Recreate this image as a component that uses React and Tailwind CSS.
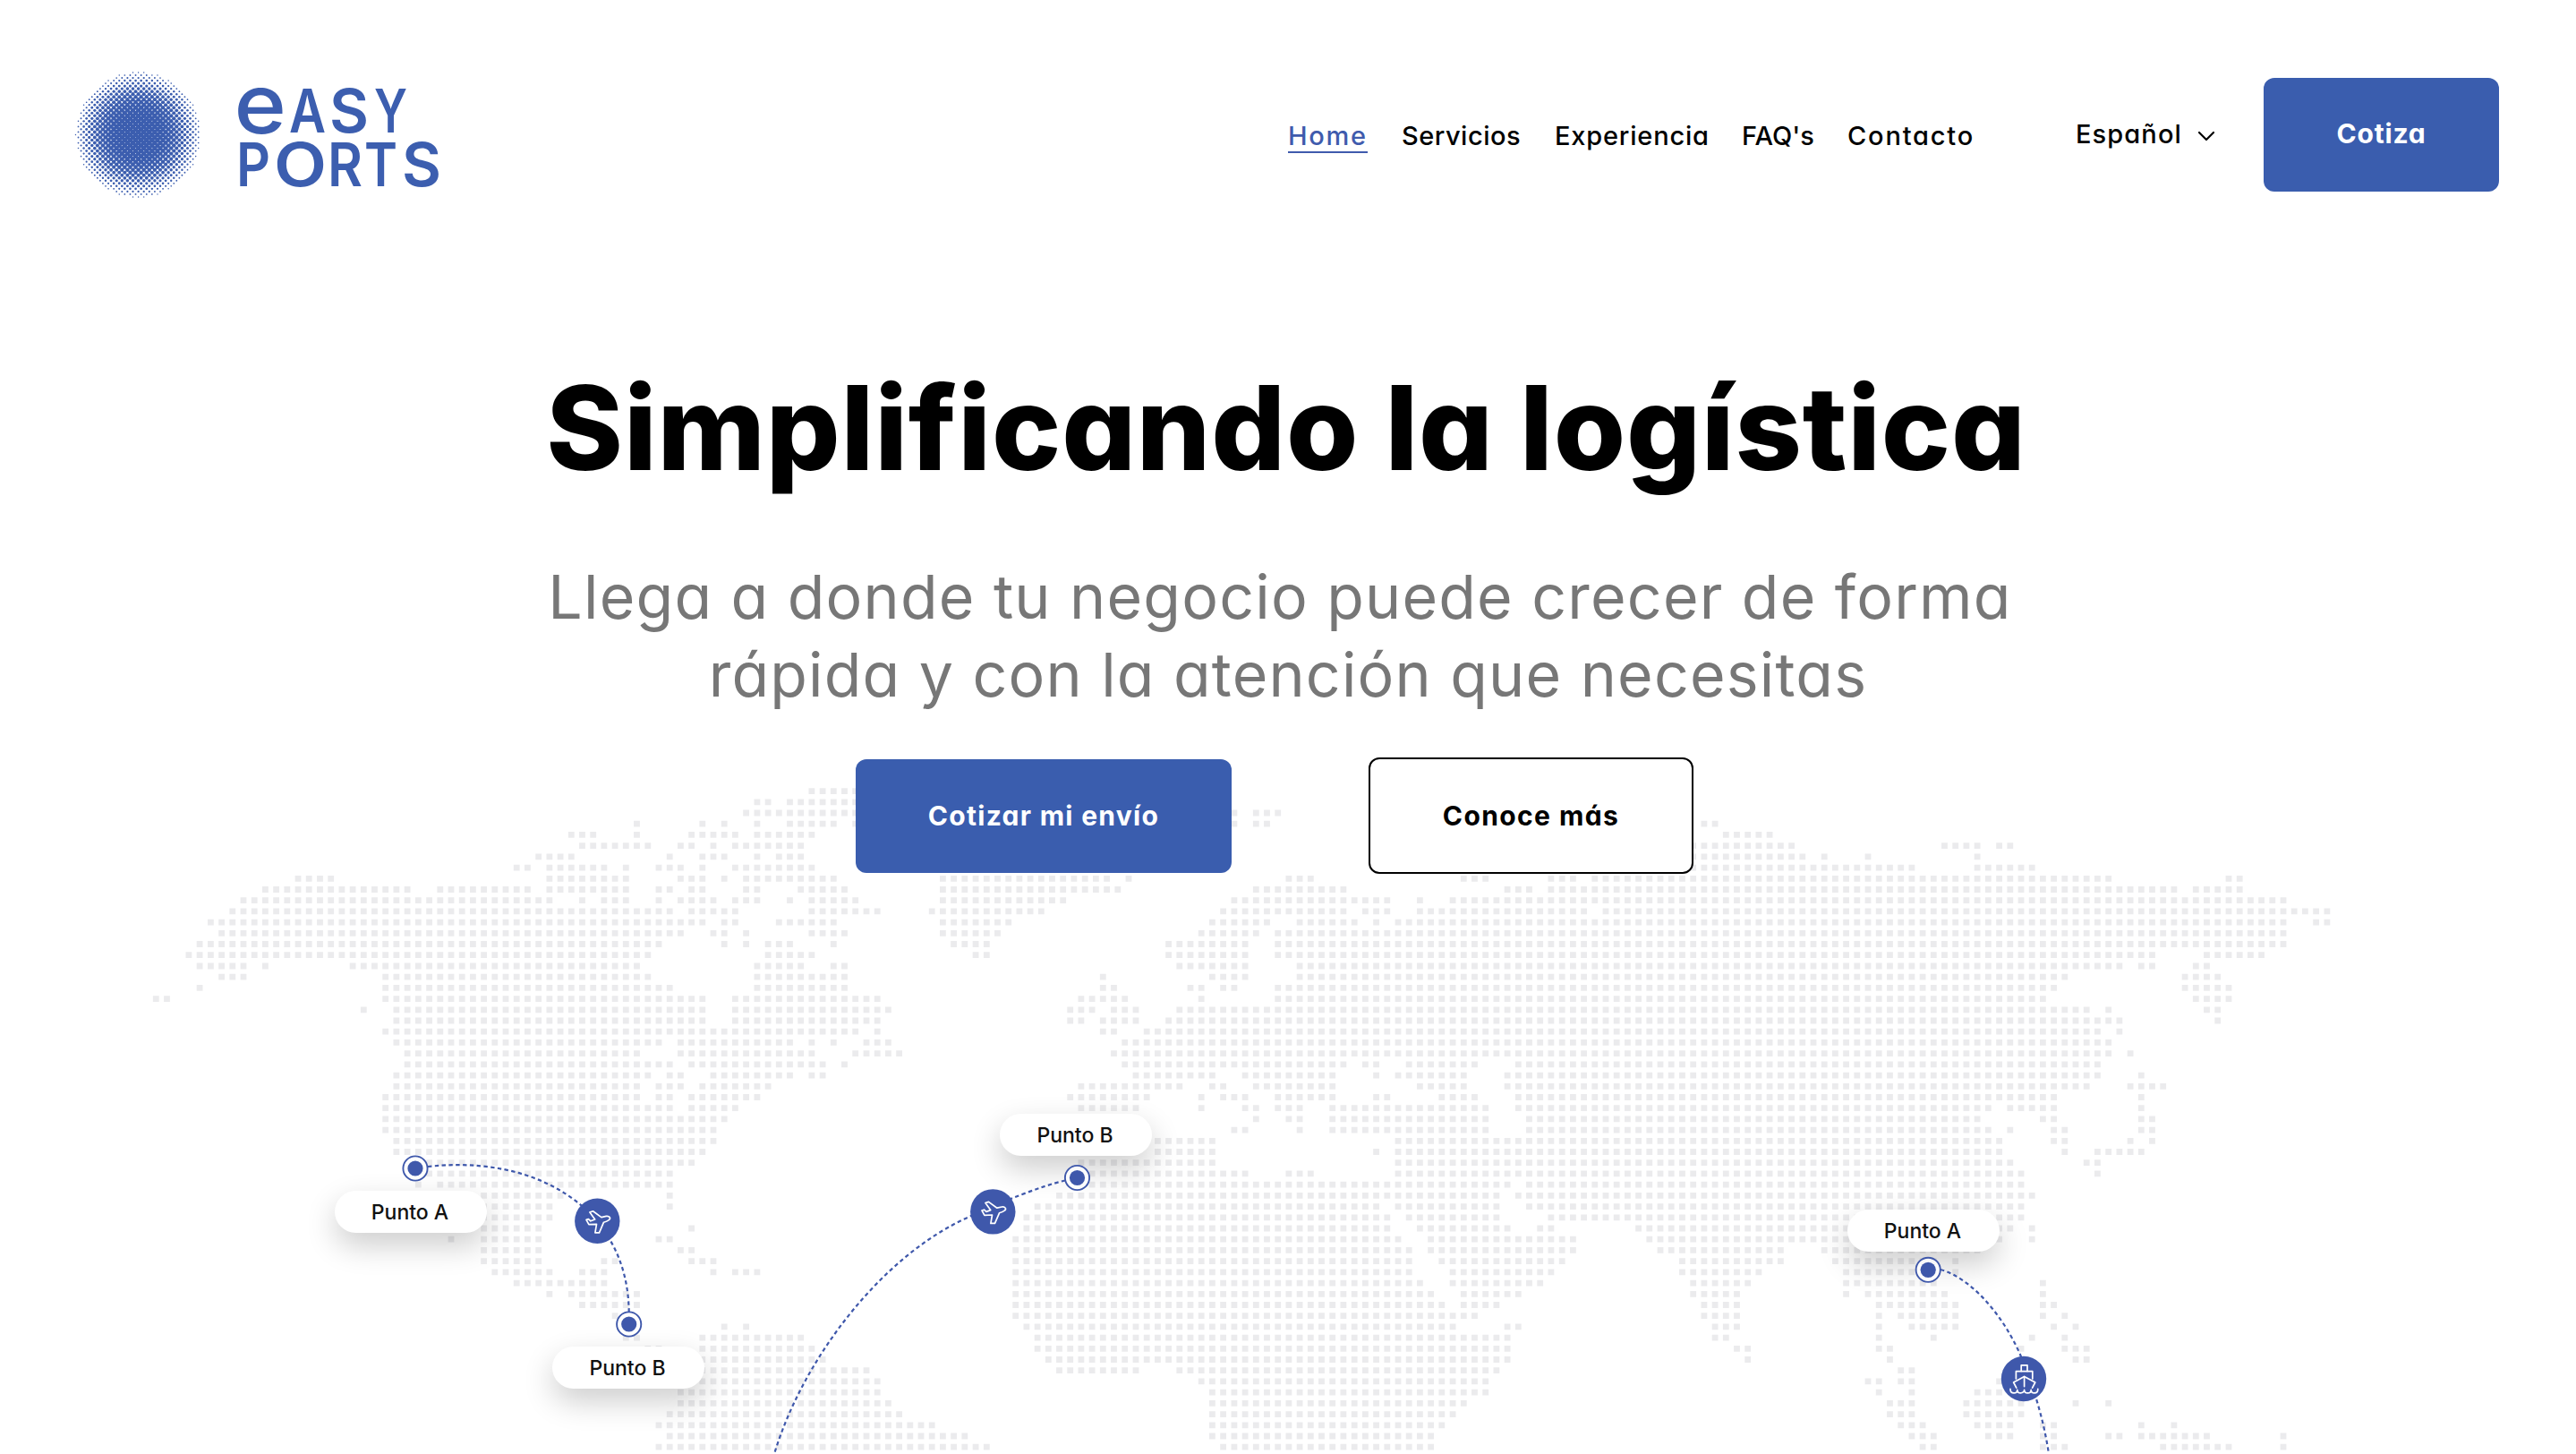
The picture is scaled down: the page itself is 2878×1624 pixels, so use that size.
import React from "react";
import { ChevronDown } from "lucide-react";

// Filled column spans of every dot row, top to bottom.
const PITCH = 12.21;
const TOP = 883.6;

const AMERICAS = [
  "60-64",
  "55-56,58-64",
  "54-64",
  "44,50,52,55,58-62,64",
  "38-40,44,49-53,55-60",
  "39-45,48-49,51,53-59",
  "35-38,47,50-52,55,57-59",
  "33-34,36-41,43,46-48,50,53-60",
  "13-16,36-43,48-50,52,54-62,72-87,89",
  "10-23,26-34,36-43,46-47,49-50,54-55,59-63,72-88",
  "8-36,39,41-43,46,48-51,53-55,58,60-64,72-83",
  "7-47,49-53,60-66,71-81",
  "5-50,52-53,57-62,72-78",
  "6-48,51-52,54,60-63,72-77",
  "4-46,52,54,56-58,62,73-76",
  "3-45,56-60,75-76",
  "4-8,10,18-44,55-59,62-63",
  "6-8,21-45,55-63",
  "4,21-47,55-63",
  "0-1,21-50,53-66",
  "19,22-50,53-67",
  "22-50,53-66",
  "21-64,66",
  "22-46,48-58,60,62,65-67",
  "23-44,48-60,64-68",
  "23-47,49-61,63",
  "22-45,47-48,51-58,60-61",
  "22-44,46-48,50-56",
  "21-44,46-47,49-55",
  "21-47,49-53",
  "21-52",
  "21-51",
  "22-51",
  "22-50",
  "25-49",
  "25-47",
  "24,26-47",
  "30-37,47",
  "30-36,47",
  "30-36",
  "30-35,49",
  "27,30-35,46-47",
  "30-35,48-49",
  "30-35,41-42,49-51",
  "31-36,39-41,51,53-55",
  "33-41",
  "36,38-44",
  "39-44",
  "42",
  "52,54",
  "43-44,50-59",
  "45-46,50-60",
  "50-61",
  "50-65",
  "50-66",
  "48-66",
  "48-67",
  "47-68",
  "46-71",
  "47-74",
  "46-76",
];

const OLD_WORLD = [
  "",
  "",
  "15,17-19",
  "15,17-18,58-59",
  "60-64",
  "57-66,80-83,85-86",
  "57-67,69,73,83",
  "57-77,83-88",
  "20-22,36-38,44-46,48-95,106-107",
  "17-25,40-42,44-101,103-107",
  "15-29,32,35-111",
  "14-25,27-29,32-47,49-115",
  "13-18,21-26,28,30-111,114-115",
  "12-17,19-111",
  "9-16,19-111",
  "9-16,19-99,104-109",
  "10-16,21-96,98-99,103-104",
  "3,13-16,21-91,102-105",
  "3-4,11-12,14-15,19-90,102-106",
  "1-5,12,19-89,103-106",
  "0-2,4-6,10-93,95,104-105",
  "0-1,3-6,9-96,105",
  "3-4,7-94,96",
  "5-95",
  "4-95,97",
  "5-25,27-28,31-37,41-94",
  "6-13,16-24,28,30-36,40-94,98",
  "1-10,13-14,17-24,32-36,40-93,97-100",
  "0-7,12,14-16,19-24,28-29,34-37,41-90,98",
  "1-6,12,16-17,19-21,24-38,41-84,86-90,98",
  "17,20-21,24-38,42-83,89-90,98-99",
  "15-16,21,24-38,42-84,86,90-91,98-99",
  "8-13,30-85,90-91,97,99",
  "8-13,28,30-85,91,94-98",
  "1-13,30-86,93-94",
  "2-16,20-22,30-87,94",
  "1-40,42-87",
  "-1-39,41-88",
  "-3-28,30-39,42-87",
  "-4-29,31-39,44-87",
  "-4-29,32-40,43-44,52-86,88",
  "-5-30,33-46,53-85,88",
  "-5-31,33-46,54-65,69-83",
  "-5-31,34-45,56-65,70-79,81",
  "-5-31,35-44,56-63,71-79,81",
  "-5-32,35-43,57-62,71-79,89",
  "-5-33,36-41,57-61,71,73-80,89",
  "-5-34,36-39,58-61,74-81,89-90",
  "-5-35,36-37,58-61,74,76-81,89,91",
  "-4-35,40-41,59-61,74,77-81,90,92",
  "-3-40,59-60,74,79,88,91",
  "-3-40,61-62,74-75,87,91-93",
  "-2-40,62,75,92-93",
  "-1-6,10-39,76-77",
  "12-38,73-74,76-77,85",
  "13-38,74,77,83-85",
  "13-36,75-77,82-87,92,95",
  "13-35,75-77,82-87",
  "13-34,76-78,83-86,89-90,98,101",
  "13-33,77-79,84-86,89-90,95-96,98-104,111",
  "14-33,78-79,89-91,100-106,111",
];

function dotPath(rows, originX) {
  let d = "";
  rows.forEach((row, r) => {
    if (!row) return;
    row.split(",").forEach((span) => {
      const [, a, b] = span.match(/^(-?\d+)(?:-(\d+))?$/);
      const last = b === undefined ? Number(a) : Number(b);
      for (let c = Number(a); c <= last; c++) {
        const x = (originX + c * PITCH - 3.4).toFixed(1);
        const y = (TOP + r * PITCH - 3.4).toFixed(1);
        d += `M${x} ${y}h6.8v6.8h-6.8z`;
      }
    });
  });
  return d;
}

const AMERICAS_PATH = dotPath(AMERICAS, 174.3);
const OLD_WORLD_PATH = dotPath(OLD_WORLD, 1195.7);

function Marker({ x, y }) {
  return (
    <g>
      <circle cx={x} cy={y} r="13.6" fill="#fff" fillOpacity="0.85" stroke="#3f58ab" strokeWidth="1.9" />
      <circle cx={x} cy={y} r="8.6" fill="#3f58ab" />
    </g>
  );
}

function PlaneStop({ x, y }) {
  return (
    <g transform={`translate(${x} ${y})`}>
      <circle r="25.2" fill="#3f58ab" />
      <path
        d="M-12.3 -1.4L-9.8 -2.2L-7.4 0L-2.6 -1.8L-8.4 -9.8L-4.8 -11L4.6 -4.2L10 -5.4C13.6 -6 15.6 -3.2 13 -1.2C11.2 0.2 8.8 1 7.2 1.4L2.2 13L-2.4 13L-0.8 3.6L-9.4 3.9Z"
        fill="none"
        stroke="#fff"
        strokeWidth="1.7"
        strokeLinejoin="round"
      />
    </g>
  );
}

function ShipStop({ x, y }) {
  return (
    <g transform={`translate(${x} ${y})`}>
      <circle r="25.2" fill="#3f58ab" />
      <g fill="none" stroke="#fff" strokeWidth="1.7" strokeLinejoin="round" strokeLinecap="round">
        <path d="M-2.8 -8.5V-15.2H4V-8.5" />
        <path d="M-8.6 0V-8.3H9.8V0" />
        <path d="M-8.2 10.2L-11.4 4L0.6 -2.6L12.8 4L9.6 10.2" />
        <path d="M0.6 -2.4V8.6" />
        <path d="M-15 11.4C-15 14.6 -13 15.8 -11 15.8C-8.6 15.8 -7.2 14.4 -7.2 12.4C-7.2 14.4 -5.6 15.8 -3.4 15.8C-1.2 15.8 0.6 14.4 0.6 12.4C0.6 14.4 2.2 15.8 4.4 15.8C6.8 15.8 8.2 14.4 8.2 12.4C8.2 14.4 9.8 15.8 12 15.8C14.2 15.8 15.8 14.6 15.8 11.4" />
      </g>
    </g>
  );
}

function Pill({ className, children }) {
  return (
    <div
      className={`absolute flex h-[47px] w-[170px] items-center justify-center rounded-full bg-white pt-px pr-[2px] text-[23px] font-medium text-[#111] shadow-[0_14px_34px_rgba(0,0,0,0.2)] ${className}`}
    >
      {children}
    </div>
  );
}

function WorldMap() {
  return (
    <div className="absolute inset-0 overflow-hidden">
      <svg className="absolute inset-0" width="2878" height="1624" viewBox="0 0 2878 1624">
        <path d={AMERICAS_PATH} fill="#ebebed" />
        <path d={OLD_WORLD_PATH} fill="#ebebed" />
      </svg>
      <Pill className="left-[374px] top-[1330px]">Punto A</Pill>
      <Pill className="left-[617px] top-[1504px]">Punto B</Pill>
      <Pill className="left-[1117px] top-[1244px]">Punto B</Pill>
      <Pill className="left-[2064px] top-[1351px]">Punto A</Pill>
      <svg className="absolute inset-0" width="2878" height="1624" viewBox="0 0 2878 1624">
        <g fill="none" stroke="#3f58ab" strokeWidth="2.2" strokeDasharray="4.4 3.4">
          <path d="M478 1303C560 1294 628 1318 667 1364C690 1392 702 1425 702.7 1465" />
          <path d="M1190 1318.5C1162 1325 1120 1342 1083 1359C985 1402 897 1518 865 1624" />
          <path d="M2168 1418C2210 1430 2247 1484 2261 1523C2274 1555 2284 1590 2289 1624" />
        </g>
        <Marker x={464} y={1305} />
        <Marker x={702.7} y={1479} />
        <Marker x={1203.5} y={1315.5} />
        <Marker x={2154.2} y={1418.3} />
        <PlaneStop x={667.3} y={1363.8} />
        <PlaneStop x={1109.3} y={1353.4} />
        <ShipStop x={2261} y={1540} />
      </svg>
    </div>
  );
}

function halftoneDots() {
  const dots = [];
  for (let j = 0; j <= 46; j++) {
    const y = 2 + j * 3.02;
    for (let i = -1; i < 25; i++) {
      const x = -1.6 + i * 6.1 + (j % 2 ? 3.05 : 0);
      const dist = Math.hypot(x - 71.3, y - 71.5) / 70;
      if (dist <= 1) dots.push([x, y, 2.75 - 2.05 * dist ** 2.6]);
    }
  }
  return dots;
}

const DOTS = halftoneDots();

// Each letter: character, left edge, advance width, baseline, font size, weight.
const LETTERS = [
  ["e", 261.5, 58.5, 148.6, 92, 500],
  ["A", 323, 41, 148.3, 66.8, 600],
  ["S", 368, 44, 148.3, 66.8, 600],
  ["Y", 418, 37, 148.3, 66.8, 600],
  ["P", 264, 38, 208, 66.8, 600],
  ["O", 306, 59, 208, 66.8, 600],
  ["R", 366, 39, 208, 66.8, 600],
  ["T", 407, 37, 208, 66.8, 600],
  ["S", 449, 44, 208, 66.8, 600],
];

function Logo() {
  return (
    <div className="flex">
      <svg width="143" height="143" viewBox="0 0 143 143" fill="#3c5eaf">
        {DOTS.map(([x, y, r], i) => (
          <circle key={i} cx={x} cy={y} r={r} />
        ))}
      </svg>
      <svg width="270" height="143" viewBox="226 79 270 143" fill="#3c5eaf" overflow="visible">
        {LETTERS.map(([ch, x, w, y, size, weight], i) => (
          <text key={i} x={x} y={y} fontSize={size} fontWeight={weight} textLength={w} lengthAdjust="spacingAndGlyphs">
            {ch}
          </text>
        ))}
      </svg>
    </div>
  );
}

export default function App() {
  return (
    <div className="relative h-[1624px] w-[2878px] overflow-hidden bg-white font-['Inter',sans-serif] text-black [font-feature-settings:'cv11']">
      <WorldMap />
      <div className="relative">
        <header className="flex h-[301px] items-center pl-[83px] pr-[86px]">
          <Logo />
          <nav className="ml-auto flex gap-[38px] whitespace-nowrap pt-[3px] text-[29px] leading-[35px] font-medium">
            <a className="w-[89px] border-b-2 border-[#3f5bad] text-[#3f5bad] tracking-[1.7px]">Home</a>
            <a className="w-[133px] tracking-[0.5px]">Servicios</a>
            <a className="w-[171px] tracking-[0.8px]">Experiencia</a>
            <a className="w-[80px]">FAQ's</a>
            <a className="w-[142px] tracking-[1.8px]">Contacto</a>
          </nav>
          <div className="ml-[113px] flex w-[158px] items-center justify-between whitespace-nowrap pb-[2px] text-[29px] font-medium tracking-[1.1px]">
            Español
            <ChevronDown className="relative top-[2px] -mr-[4px] size-8" strokeWidth={1.6} />
          </div>
          <a className="ml-[52px] flex h-[127px] w-[263px] items-center justify-center rounded-xl bg-[#3a5dae] pb-[2px] text-[30px] font-bold tracking-[0.8px] text-white">
            Cotiza
          </a>
        </header>
        <main className="flex flex-col items-center">
          <h1 className="mt-[97px] whitespace-nowrap pr-1 text-[130px] leading-[160px] font-extrabold tracking-[0.8px]">
            Simplificando la logística
          </h1>
          <p className="mt-[65px] whitespace-nowrap text-center text-[68px] leading-[86.5px] tracking-[1.2px] text-[#777]">
            <span className="mr-[18px] block">Llega a donde tu negocio puede crecer de forma</span>
            <span className="block">rápida y con la atención que necesitas</span>
          </p>
          <div className="mt-[50px] flex items-center gap-[153px] pr-[30px] text-[30px] font-bold">
            <a className="flex h-[127px] w-[420px] items-center justify-center rounded-xl bg-[#3a5dae] tracking-[1.3px] text-white">
              Cotizar mi envío
            </a>
            <a className="flex h-[130px] w-[363px] items-center justify-center rounded-xl border-2 border-black bg-white tracking-[1.4px]">
              Conoce más
            </a>
          </div>
        </main>
      </div>
    </div>
  );
}
